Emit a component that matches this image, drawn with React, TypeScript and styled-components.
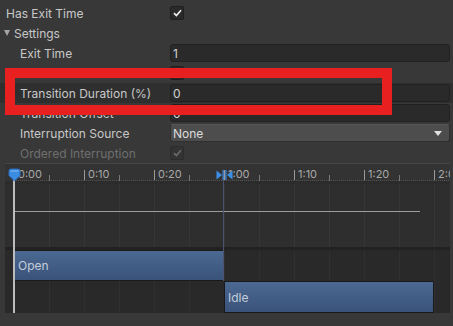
import React from "react";
import styled, { createGlobalStyle } from "styled-components";

const GlobalStyle = createGlobalStyle`
  html, body {
    margin: 0;
    padding: 0;
    background: #383838;
  }
  body {
    font-family: Inter, "Noto Sans", sans-serif;
    font-size: 12px;
    color: #c8c8c8;
    overflow: hidden;
  }
`;

const Panel = styled.div`
  position: relative;
  width: 453px;
  height: 326px;
  box-sizing: border-box;
  padding-top: 3px;
  display: flex;
  flex-direction: column;
  overflow: hidden;
`;

const Row = styled.div<{ $highlight?: boolean }>`
  display: grid;
  grid-template-columns: 170px 1fr;
  align-items: center;
  height: 20px;
  padding-right: 3px;
  flex-shrink: 0;
  background: ${p => (p.$highlight ? "#2f2f2f" : "transparent")};
`;

const Label = styled.div<{ $indent?: number; $disabled?: boolean }>`
  display: flex;
  align-items: center;
  gap: 4px;
  padding-left: ${p => p.$indent ?? 20}px;
  color: ${p => (p.$disabled ? "#6f6f6f" : "#c8c8c8")};
  white-space: nowrap;
`;

const Foldout = styled.span`
  width: 0;
  height: 0;
  border-left: 3.5px solid transparent;
  border-right: 3.5px solid transparent;
  border-top: 6px solid #a5a5a5;
`;

const Field = styled.div`
  height: 18px;
  box-sizing: border-box;
  display: flex;
  align-items: center;
  padding: 0 2px;
  background: #2a2a2a;
  border: 1px solid #212121;
  border-radius: 3px;
  color: #d2d2d2;
`;

const Dropdown = styled(Field)`
  justify-content: space-between;
  padding-right: 7px;
  background: #4d4d4d;
  border-color: #303030;
  border-top-color: #555;
  color: #dcdcdc;
`;

const DropArrow = styled.span`
  width: 0;
  height: 0;
  border-left: 4px solid transparent;
  border-right: 4px solid transparent;
  border-top: 5px solid #e0e0e0;
`;

const Checkbox = styled.div<{ $disabled?: boolean }>`
  width: 14px;
  height: 14px;
  box-sizing: border-box;
  display: flex;
  align-items: center;
  justify-content: center;
  background: ${p => (p.$disabled ? "#333" : "#2a2a2a")};
  border: 1px solid ${p => (p.$disabled ? "#2c2c2c" : "#1f1f1f")};
  border-radius: 2px;
  color: ${p => (p.$disabled ? "#6a6a6a" : "#eeeeee")};
`;

const Highlight = styled.div`
  position: absolute;
  left: 5px;
  top: 68px;
  width: 387px;
  height: 47px;
  box-sizing: border-box;
  border: 10px solid #e8201f;
  pointer-events: none;
`;

/* timeline */

const Timeline = styled.div`
  position: relative;
  flex: 1;
  margin: 0 3px 13px 5px;
  display: flex;
  flex-direction: column;
  overflow: hidden;
  background: #2a2a2a;
`;

const Ruler = styled.div`
  height: 21px;
  flex-shrink: 0;
  box-sizing: border-box;
  display: flex;
  padding-left: 9px;
  background: linear-gradient(#333 0 17px, #2c2c2c 17px);
  border-top: 1px solid #454545;
  overflow: hidden;
`;

const RulerCell = styled.div`
  position: relative;
  width: 35px;
  flex-shrink: 0;
  display: flex;
  align-items: flex-start;
  border-bottom: 1px dotted #505050;
  margin-bottom: 3px;
`;

const Tick = styled.span<{ $major?: boolean }>`
  width: 1px;
  flex-shrink: 0;
  height: ${p => (p.$major ? 10 : 6)}px;
  margin-top: ${p => (p.$major ? 6 : 11)}px;
  background: ${p => (p.$major ? "#9a9a9a" : "#7a7a7a")};
`;

const TickLabel = styled.span`
  margin: 4px 0 0 3px;
  font-size: 11px;
  line-height: 13px;
  color: #a9a9a9;
  white-space: nowrap;
`;

const Grid = styled.div`
  background-color: #2e2e2e;
  background-image: linear-gradient(90deg, #363636 1px, transparent 1px);
  background-size: 35px 100%;
  background-position: 9px 0;
`;

const CurveArea = styled(Grid)`
  height: 63px;
  flex-shrink: 0;
  box-sizing: border-box;
  padding-top: 27px;
`;

const CurveLine = styled.div`
  margin-left: 9px;
  width: 406px;
  height: 1px;
  background: #9c9c9c;
`;

const Separator = styled.div`
  height: 3px;
  flex-shrink: 0;
  background: #222;
`;

const Track = styled(Grid)<{ $h: number }>`
  height: ${p => p.$h}px;
  flex-shrink: 0;
  display: flex;
  background-color: #292929;
  background-image: linear-gradient(90deg, #303030 1px, transparent 1px);
`;

const StateBar = styled.div<{ $x: number; $w: number }>`
  margin-left: ${p => p.$x}px;
  width: ${p => p.$w}px;
  box-sizing: border-box;
  display: flex;
  align-items: center;
  padding-left: 3px;
  background: linear-gradient(#4b6992, #3a5279);
  border: 1px solid #1a1a1a;
  color: #c3ccd9;
`;

const Playhead = styled.div`
  position: absolute;
  left: 8px;
  top: 15px;
  bottom: 0;
  width: 2px;
  background: #bcbcbc;
`;

const TransitionLine = styled.div`
  position: absolute;
  left: 218px;
  top: 7px;
  height: 111px;
  width: 1px;
  background: #4a5370;
`;

const Marker = styled.svg<{ $x: number; $y: number }>`
  position: absolute;
  left: ${p => p.$x}px;
  top: ${p => p.$y}px;
`;

const ticks = Array.from({ length: 13 }, (_, i) => i);
const labels = ["0:00", "0:10", "0:20", "1:00", "1:10", "1:20", "2:00"];

const Check = () => (
  <svg width="9" height="8" viewBox="0 0 9 8">
    <path d="M1 4.2 L3.4 6.5 L8 1.3" fill="none" stroke="currentColor" strokeWidth="1.7" />
  </svg>
);

export default function App() {
  return (
    <Panel>
      <GlobalStyle />
      <Row>
        <Label $indent={6}>Has Exit Time</Label>
        <Checkbox><Check /></Checkbox>
      </Row>
      <Row>
        <Label $indent={4}><Foldout />Settings</Label>
      </Row>
      <Row>
        <Label>Exit Time</Label>
        <Field>1</Field>
      </Row>
      <Row>
        <Label>Fixed Duration</Label>
        <Checkbox />
      </Row>
      <Row $highlight>
        <Label>Transition Duration (%)</Label>
        <Field>0</Field>
      </Row>
      <Row>
        <Label>Transition Offset</Label>
        <Field>0</Field>
      </Row>
      <Row>
        <Label>Interruption Source</Label>
        <Dropdown>None<DropArrow /></Dropdown>
      </Row>
      <Row>
        <Label $disabled>Ordered Interruption</Label>
        <Checkbox $disabled><Check /></Checkbox>
      </Row>

      <Timeline>
        <Ruler>
          {ticks.map(i => (
            <RulerCell key={i}>
              <Tick $major={i % 2 === 0} />
              {i % 2 === 0 && <TickLabel>{labels[i / 2]}</TickLabel>}
            </RulerCell>
          ))}
        </Ruler>
        <CurveArea>
          <CurveLine />
        </CurveArea>
        <Separator />
        <Track $h={31}>
          <StateBar $x={9} $w={210}>Open</StateBar>
        </Track>
        <Track $h={32}>
          <StateBar $x={219} $w={210}>Idle</StateBar>
        </Track>

        <TransitionLine />
        <Playhead />
        <Marker $x={3} $y={5} width="13" height="14" viewBox="0 0 13 14">
          <path d="M1 3 Q1 1 3 1 H10 Q12 1 12 3 V7.5 L6.5 13 L1 7.5 Z" fill="#3a8be2" stroke="#2a6cc0" />
          <path d="M2.5 3 H10.5" stroke="#7fb8f2" strokeWidth="1.2" />
        </Marker>
        <Marker $x={211} $y={7} width="17" height="10" viewBox="0 0 17 10">
          <path d="M0.5 0.5 L6 5 L0.5 9.5 Z" fill="#3d8fe6" />
          <path d="M16.5 0.5 L11 5 L16.5 9.5 Z" fill="#3d8fe6" />
          <rect x="6.5" y="0" width="1.2" height="10" fill="#3d8fe6" />
          <rect x="9.3" y="0" width="1.2" height="10" fill="#3d8fe6" />
        </Marker>
      </Timeline>

      <Highlight />
    </Panel>
  );
}
